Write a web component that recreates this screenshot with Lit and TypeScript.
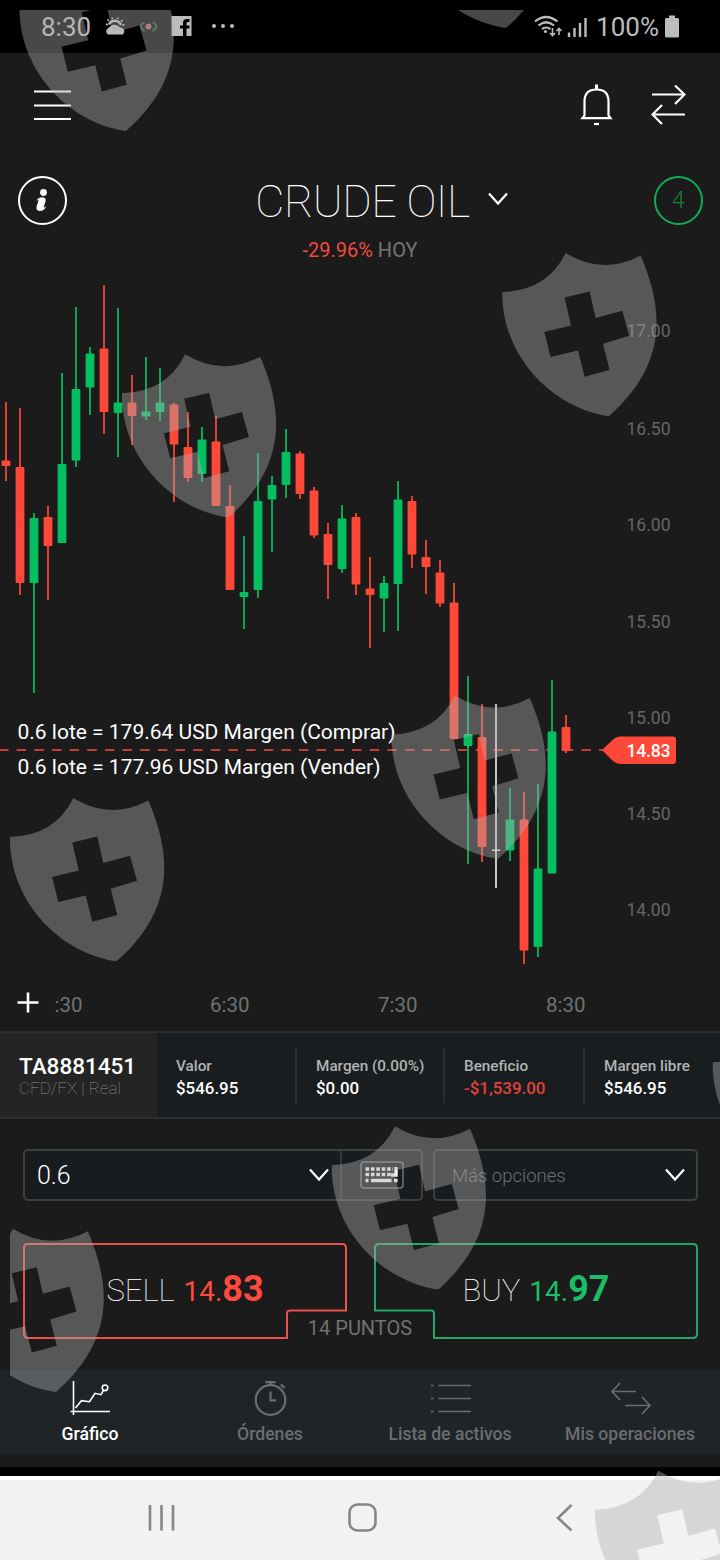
import { LitElement, html, svg, css } from 'lit';
import { customElement, property } from 'lit/decorators.js';
import { classMap } from 'lit/directives/class-map.js';

type Candle = [kind: string, high: number, low: number, top: number, bottom: number];

// high / low of the wick, then top / bottom of the body, in chart units
const CANDLES: Candle[] = [
  ['down', 402, 481, 460.5, 466],
  ['down', 408, 595, 467, 583],
  ['up', 513, 693, 518, 583],
  ['down', 506, 600, 517, 546],
  ['up', 373, 543, 464, 543],
  ['up', 307, 467, 389, 460.5],
  ['up', 347, 415, 353.5, 387.5],
  ['down', 285, 434, 348.5, 412],
  ['up', 308, 457, 402.5, 413],
  ['down', 375, 445, 402.5, 416],
  ['up', 357, 420, 411.5, 416.5],
  ['up', 368, 421, 402.5, 412],
  ['down', 403, 502, 404.5, 444.5],
  ['down', 412, 482, 447, 478],
  ['up', 427, 482, 439.5, 474],
  ['down', 416, 506, 441.5, 506],
  ['down', 485, 590, 506, 590],
  ['up', 536, 629, 592, 597],
  ['up', 453, 598, 501, 590],
  ['up', 476, 552, 485, 499.5],
  ['up', 429, 498, 452, 485],
  ['down', 451, 499, 453.5, 494],
  ['down', 487, 538, 490.5, 535.5],
  ['down', 523, 599, 534, 565],
  ['up', 505, 573, 518.5, 569],
  ['down', 513, 595, 517, 584.5],
  ['down', 557, 648, 588.5, 595],
  ['up', 576, 632, 583, 598.5],
  ['up', 481, 631, 499.5, 584],
  ['down', 496, 568, 501, 554.5],
  ['down', 540, 594, 557, 567],
  ['down', 560, 607, 572.5, 603.5],
  ['down', 583, 739, 602.5, 739],
  ['up', 676, 864, 734, 746],
  ['down', 704, 862, 737, 847],
  ['flat', 704, 888, 849.4, 851],
  ['up', 788, 861, 819.5, 850.5],
  ['down', 792, 964, 819.5, 950.5],
  ['up', 784, 957, 868.5, 947],
  ['up', 680, 873, 731.5, 873.5],
  ['down', 715, 753, 727, 751],
];

const PRICES: [string, number][] = [
  ['17.00', 337],
  ['16.50', 435],
  ['16.00', 531],
  ['15.50', 628],
  ['15.00', 724],
  ['14.50', 820],
  ['14.00', 916],
];

const TIMES: [string, number][] = [
  [':30', 54.5],
  ['6:30', 210],
  ['7:30', 378],
  ['8:30', 546],
];

@customElement('price-chart')
export class PriceChart extends LitElement {
  static override styles = css`
    :host {
      display: block;
      height: 762px;
    }

    svg {
      display: block;
      font-family: Roboto, sans-serif;
    }

    .up {
      fill: #04bf5f;
    }

    .down {
      fill: #ff4837;
    }

    .flat {
      fill: #e4e4e4;
    }

    .wick {
      opacity: 0.85;
    }

    .scale {
      fill: #656666;
      font-size: 17.5px;
    }

    .time {
      fill: #707272;
      font-size: 20.5px;
    }

    .level {
      stroke: #c04039;
      stroke-width: 2;
    }

    .margin {
      fill: #fff;
      font-size: 21px;
    }

    .tag {
      fill: #fff;
      font-size: 17.5px;
      font-weight: 500;
    }

    .add {
      fill: none;
      stroke: #fff;
      stroke-width: 2.6;
    }
  `

  candle([kind, high, low, top, bottom]: Candle, index: number) {
    const x = 6 + index * 14;

    return svg`
      <g class=${kind}>
        <rect class="wick" x=${x - 1} y=${high} width="2" height=${low - high} />
        <rect x=${x - 4.4} y=${top} width="8.8" height=${bottom - top} rx="1" />
      </g>
    `;
  }

  override render() {
    return html`
      <svg width="720" height="762" viewBox="0 270 720 762">
        ${PRICES.map(([label, y]) => svg`
          <text class="scale" x="626.5" y=${y} textLength="44">${label}</text>
        `)}
        ${TIMES.map(([label, x]) => svg`
          <text class="time" x=${x} y="1012">${label}</text>
        `)}
        <path class="level" d="M-1 750H603" stroke-dasharray="9.5 8.15" />
        ${CANDLES.map((candle, index) => this.candle(candle, index))}
        <text class="margin" x="17.5" y="739" textLength="378">0.6 lote = 179.64 USD Margen (Comprar)</text>
        <text class="margin" x="17.5" y="774" textLength="363">0.6 lote = 177.96 USD Margen (Vender)</text>
        <path
          class="down"
          d="M602 750L612 740.5Q616 736.5 621 736.5H673Q676 736.5 676 739.5V761Q676 764 673 764H621Q616 764 612 760Z"
        />
        <text class="tag" x="626.5" y="757" textLength="44">14.83</text>
        <path class="add" d="M17.5 1002.5H38.5M28 992.5V1012.5" />
      </svg>
    `;
  }
}

@customElement('account-figure')
export class AccountFigure extends LitElement {
  static override styles = css`
    :host {
      border-left: 2px solid #2a2f32;
      box-sizing: border-box;
      display: block;
      height: 55px;
      padding: 8px 0 0 19px;
    }

    :host([first]) {
      border-left: 0;
    }

    .label {
      color: #b0b3b3;
      font-size: 15.3px;
      font-weight: 500;
      line-height: 20px;
      white-space: nowrap;
    }

    .amount {
      color: #fff;
      font-size: 16.9px;
      font-weight: 500;
      line-height: 25px;
    }

    .amount--loss {
      color: #e0413c;
    }
  `

  @property()
  label = '';

  @property()
  amount = '';

  override render() {
    return html`
      <div class="label">${this.label}</div>
      <div class=${classMap({
        'amount': true,
        'amount--loss': this.amount.startsWith('-'),
      })}>${this.amount}</div>
    `;
  }
}

const SHIELD = `
  M0 39.3Q45 38 63.3 .3Q100 23 138.3 2.7C158.5 50 170 108 106.5 163.5
  C51 156 -1 104 0 39.3Z
  M62.3 44.7L68.7 72.7L42 79.3L48.3 104.3L75.7 97.7L82.3 124L107.3 117.3
  L100.7 91L127 83L120 58L93.3 65.3L87.3 38.7Z
`;

const SHIELDS = [
  [19.5, -32.5],
  [399.5, -135.5],
  [502.3, 252.7],
  [121.9, 354],
  [391.5, 695.3],
  [10, 797.8],
  [331.7, 1126],
  [-50.5, 1228.5],
  [712.7, 1023],
  [595, 1470.5],
];

@customElement('shield-layer')
export class ShieldLayer extends LitElement {
  static override styles = css`
    :host {
      inset: 10px 0 0 10px;
      overflow: hidden;
      pointer-events: none;
      position: absolute;
    }

    path {
      fill: rgba(174, 174, 174, 0.41);
      fill-rule: evenodd;
    }
  `

  override render() {
    return html`
      <svg width="710" height="1550" viewBox="10 10 710 1550">
        ${SHIELDS.map(([x, y]) => svg`
          <path d=${SHIELD} transform="translate(${x} ${y})" />
        `)}
      </svg>
    `;
  }
}

const chevron = html`
  <svg width="22" height="14" viewBox="0 0 22 14" fill="none" stroke="#fff" stroke-width="2.2">
    <path d="M2 1.5L11 11.5L20 1.5" />
  </svg>
`;

const TABS = [
  {
    label: 'Gráfico',
    icon: svg`
      <path d="M13.5 1V35M10.5 31.5H50M15.5 28L21.5 20.7L29.5 21.7L35 13.3L41 14.7L43.3 10.6" />
      <circle cx="45" cy="7.8" r="2.8" />
    `,
  },
  {
    label: 'Órdenes',
    icon: svg`
      <g stroke-width="2.2">
        <circle cx="30.5" cy="20" r="14.8" />
        <path d="M30.5 11.5V20.3H36M25.5 2.2H35.5M30.5 2.5V5M41 4.5L44.5 8" />
      </g>
    `,
  },
  {
    label: 'Lista de activos',
    icon: svg`
      <path d="M18.5 5.5H51M18.5 18.5H51M18.5 31.5H51" />
      <path d="M11 5.5H13.5M11 18.5H13.5M11 31.5H13.5" />
    `,
  },
  {
    label: 'Mis operaciones',
    icon: svg`
      <path d="M36 11.5H12M20 3L12 11.5L20 20M25 25.5H50M42 17L50 25.5L42 34" />
    `,
  },
];

@customElement('app-root')
export class AppRoot extends LitElement {
  static override styles = css`
    :host {
      background: #1b1b1b;
      color: #fff;
      display: flex;
      flex-direction: column;
      font-family: Roboto, sans-serif;
      height: 1560px;
      overflow: hidden;
      position: relative;
      width: 720px;
    }

    * {
      box-sizing: border-box;
    }

    svg {
      display: block;
      flex: none;
    }

    .status {
      align-items: center;
      background: #000;
      color: #bcbcbc;
      display: flex;
      font-size: 26px;
      height: 53px;
      justify-content: space-between;
      padding: 1px 40px 0 41px;
    }

    .status__side {
      align-items: center;
      display: flex;
    }

    .toolbar {
      align-items: center;
      display: flex;
      height: 104px;
      justify-content: space-between;
      padding: 0 34px 0 33px;
    }

    .toolbar__right {
      display: flex;
      gap: 37px;
    }

    .heading {
      align-items: center;
      display: flex;
      height: 86px;
      justify-content: space-between;
      padding: 0 17px 0 18px;
    }

    .heading__title {
      align-items: center;
      display: flex;
      font-size: 45px;
      font-weight: 100;
      gap: 17px;
      letter-spacing: -0.55px;
      padding: 2px 0 0 43px;
    }

    .heading__title svg {
      margin-bottom: 4px;
    }

    .badge {
      border: 2px solid #12ab59;
      border-radius: 50%;
      color: #12803f;
      font-size: 23px;
      font-weight: 300;
      height: 49px;
      line-height: 45px;
      text-align: center;
      width: 49px;
    }

    .change {
      color: #737676;
      font-size: 20px;
      height: 27px;
      line-height: 14px;
      text-align: center;
    }

    .change__value {
      color: #f04a3f;
    }

    .account {
      background: #191d1f;
      border-bottom: 2px solid #2a302f;
      border-top: 2px solid #2a302f;
      display: grid;
      grid-template-columns: 157px 138px 148px 140px 1fr;
      height: 88px;
      margin-top: -1px;
      align-items: center;
    }

    .account__id {
      align-self: stretch;
      background: #242424;
      font-size: 22.5px;
      font-weight: 500;
      line-height: 24px;
      padding: 21px 0 0 19px;
    }

    .account__kind {
      color: #909090;
      font-size: 17px;
      font-weight: 100;
      line-height: 20px;
    }

    .inputs {
      display: flex;
      gap: 10px;
      margin: 30px 22px 0 23px;
    }

    .field {
      align-items: center;
      background: #181c1f;
      border: 2px solid #3b4041;
      border-radius: 5px;
      display: flex;
      font-size: 25px;
      font-weight: 300;
      height: 52px;
      justify-content: space-between;
      padding: 0 10px 0 12px;
      width: 265px;
    }

    .field svg {
      margin-bottom: 1px;
    }

    .field--lots {
      padding: 0 0 0 12px;
      width: 400px;
    }

    .field__tail {
      align-items: center;
      display: flex;
      gap: 10px;
      height: 100%;
    }

    .field__keys {
      align-items: center;
      border-left: 2px solid #33383a;
      display: flex;
      height: 100%;
      justify-content: center;
      width: 81px;
    }

    .field__hint {
      color: #6b6f70;
      font-size: 18.5px;
      padding: 2px 0 0 5px;
    }

    .deal {
      display: grid;
      grid-template-columns: 324px 324px;
      gap: 27px;
      height: 96px;
      margin: 42px 22px 0 23px;
      position: relative;
    }

    .deal__button {
      display: grid;
    }

    .deal__button > * {
      grid-area: 1 / 1;
    }

    .deal__text {
      align-items: baseline;
      display: flex;
      font-size: 31px;
      font-weight: 100;
      justify-content: center;
      padding-top: 25px;
    }

    .deal__whole {
      font-size: 28px;
      font-weight: 400;
      margin-left: 9px;
    }

    .deal__cents {
      font-size: 36px;
      font-weight: 700;
    }

    .deal__price--sell {
      color: #ff4a3f;
    }

    .deal__price--buy {
      color: #1bbd66;
    }

    .deal__spread {
      bottom: -1px;
      color: #717272;
      font-size: 20px;
      left: 0;
      line-height: 24px;
      position: absolute;
      text-align: center;
      width: 674px;
    }

    .tabs {
      background: #1f2427;
      display: grid;
      grid-template-columns: repeat(4, 1fr);
      height: 84px;
      margin-top: 31px;
    }

    .tab {
      align-items: center;
      color: #6b6e6f;
      display: flex;
      flex-direction: column;
      font-size: 17.6px;
      font-weight: 500;
      gap: 7px;
      padding-top: 10px;
    }

    .tab--active {
      color: #fff;
    }

    .tab svg {
      fill: none;
      stroke: currentColor;
      stroke-width: 1.6;
    }

    .system {
      background: #f2f2f2;
      border-top: 4px solid #fff;
      box-shadow: 0 -9px #000;
      flex: 1;
      margin-top: 22px;
    }
  `

  renderStatus() {
    return html`
      <div class="status">
        <div class="status__side">
          <span>8:30</span>
          <svg width="145" height="26" viewBox="91 14 145 26" fill="#bcbcbc">
            <path d="M108 34.5A3.6 3.6 0 0 1 108.5 28A7 7 0 0 1 120 27.5A4 4 0 0 1 123 34.5Z" />
            <path d="M109 24.5A6.5 6.5 0 0 1 121 25" fill="none" stroke="#bcbcbc" stroke-width="2.5" />
            <path d="M106 24L108 25M107.5 19.5L109 21M112 17.5L112.5 19M118 17.5L117.5 19M122.5 20L121 21.5M124.5 24.5L122.5 25.5" stroke="#bcbcbc" stroke-width="1.6" />
            <path d="M144.5 22Q137 26.5 144.5 31M152.5 22Q160 26.5 152.5 31" fill="none" stroke="#285345" stroke-width="1.8" />
            <circle cx="148.5" cy="26.5" r="3" fill="#b4585c" />
            <path d="M171.5 16H191.5V36H186.5V28.5H189.5V25.5H186.5V23.5Q186.5 22 188 22H189.5V19H187Q183 19 183 23V25.5H180V28.5H183V36H171.5Z" />
            <circle cx="214" cy="26" r="2" />
            <circle cx="223" cy="26" r="2" />
            <circle cx="232" cy="26" r="2" />
          </svg>
        </div>
        <div class="status__side">
          <svg width="62" height="26" viewBox="535 14 62 26" fill="none" stroke="#bcbcbc" stroke-width="2.2">
            <path d="M536 21.5Q547 12.5 558.5 21.5M539.5 25.5Q547 19 555 25.5M543 29Q547 26 551.5 29" />
            <circle cx="546.5" cy="31.5" r="1.6" fill="#bcbcbc" stroke="none" />
            <path d="M553.5 28V35.5M551 33L553.5 35.5L556 33M560 35V28.5M557.5 31L560 28.5L562.5 31" stroke-width="1.6" />
            <path d="M570 37V32.5M575.5 37V28M581 37V23M586.5 37V18" stroke-width="2.4" />
          </svg>
          <span>100%</span>
          <svg width="21" height="26" viewBox="659 14 21 26" fill="#bcbcbc">
            <path d="M669 15.5H675V18H677.5Q679 18 679 19.5V36Q679 37.5 677.5 37.5H666.5Q665 37.5 665 36V19.5Q665 18 666.5 18H669Z" />
          </svg>
        </div>
      </div>
    `;
  }

  renderHeader() {
    return html`
      <div class="toolbar">
        <svg width="38" height="32" viewBox="33 89 38 32" stroke="#fff" stroke-width="2">
          <path d="M34 91.5H71M34 105.5H71M34 119H71" />
        </svg>
        <div class="toolbar__right">
          <svg width="34" height="42" viewBox="580 85 34 42" fill="none" stroke="#fff" stroke-width="2.2">
            <path d="M582.5 119.2H610.5L608.5 116.5V102.5C608.5 94 603.5 90.5 596.5 90.5S584.5 94 584.5 102.5V116.5Z" />
            <path d="M596.5 85.5V90" stroke-width="3" />
            <path d="M594 125H599" />
          </svg>
          <svg width="35" height="42" viewBox="651 85 35 42" fill="none" stroke="#fff" stroke-width="2.2">
            <path d="M652 95.5H684.5M675 86.5L684.5 95.5L675 105M685 115.5H652.5M662 106L652.5 115.5L662 125" />
          </svg>
        </div>
      </div>
      <div class="heading">
        <svg width="49" height="49" viewBox="18 176 49 49" fill="#fff">
          <circle cx="42.5" cy="200.5" r="23.5" fill="none" stroke="#fff" stroke-width="2" />
          <circle cx="43.5" cy="192.5" r="3.4" />
          <path d="M36.5 200.5Q39 197 42.5 197.2Q46.5 197.5 45.5 201.5L43.5 207.5Q44.5 208 46.5 206Q44.5 211 39.5 211Q35.5 210.5 36.7 206L38.7 200Z" />
        </svg>
        <div class="heading__title">CRUDE OIL ${chevron}</div>
        <div class="badge">4</div>
      </div>
      <div class="change"><span class="change__value">-29.96%</span> HOY</div>
    `;
  }

  renderInputs() {
    return html`
      <div class="inputs">
        <div class="field field--lots">
          0.6
          <div class="field__tail">
            ${chevron}
            <div class="field__keys">
              <svg width="44" height="28" viewBox="0 0 44 28" fill="none" stroke="#f4f4f4">
                <rect x="1" y="1" width="42" height="26" rx="3" stroke="#717476" stroke-width="1.5" />
                <path d="M5.5 8H33M5.5 13.5H31" stroke-width="3.4" stroke-dasharray="3.6 1.8" />
                <path d="M5.5 19.5H8.5M11 19.5H31.5M34 19.5H37.5" stroke-width="3.4" />
                <path d="M36 6V14H31" stroke-width="3.4" />
              </svg>
            </div>
          </div>
        </div>
        <div class="field">
          <span class="field__hint">Más opciones</span>
          ${chevron}
        </div>
      </div>
    `;
  }

  renderDeal() {
    return html`
      <div class="deal">
        <div class="deal__button">
          <svg width="324" height="96" fill="none" stroke="#e9524a" stroke-width="2">
            <path d="M5 1H319Q323 1 323 5V67.5H267Q264 67.5 264 70.5V95H5Q1 95 1 91V5Q1 1 5 1Z" />
          </svg>
          <div class="deal__text">
            SELL
            <span class="deal__whole deal__price--sell">14.</span>
            <span class="deal__cents deal__price--sell">83</span>
          </div>
        </div>
        <div class="deal__button">
          <svg width="324" height="96" fill="none" stroke="#22a868" stroke-width="2">
            <path d="M5 1H319Q323 1 323 5V91Q323 95 319 95H60V70.5Q60 67.5 57 67.5H1V5Q1 1 5 1Z" />
          </svg>
          <div class="deal__text">
            BUY
            <span class="deal__whole deal__price--buy">14.</span>
            <span class="deal__cents deal__price--buy">97</span>
          </div>
        </div>
        <div class="deal__spread">14 PUNTOS</div>
      </div>
    `;
  }

  override render() {
    return html`
      ${this.renderStatus()}
      ${this.renderHeader()}
      <price-chart></price-chart>
      <div class="account">
        <div class="account__id">
          TA8881451
          <div class="account__kind">CFD/FX | Real</div>
        </div>
        <account-figure first label="Valor" amount="$546.95"></account-figure>
        <account-figure label="Margen (0.00%)" amount="$0.00"></account-figure>
        <account-figure label="Beneficio" amount="-$1,539.00"></account-figure>
        <account-figure label="Margen libre" amount="$546.95"></account-figure>
      </div>
      ${this.renderInputs()}
      ${this.renderDeal()}
      <div class="tabs">
        ${TABS.map(({ label, icon }, index) => html`
          <div class=${classMap({ 'tab': true, 'tab--active': index === 0 })}>
            <svg width="60" height="37" viewBox="0 0 60 37">${icon}</svg>
            <span>${label}</span>
          </div>
        `)}
      </div>
      <div class="system">
        <svg width="720" height="80" viewBox="0 1480 720 80" fill="none" stroke="#868686" stroke-width="2.6">
          <path d="M150 1505V1530.5M161.5 1505V1530.5M173 1505V1530.5" />
          <rect x="349.5" y="1504.5" width="26" height="26" rx="8" />
          <path d="M571.5 1505L558 1518L571.5 1530.5" />
        </svg>
      </div>
      <shield-layer></shield-layer>
    `;
  }
}

declare global {
  interface HTMLElementTagNameMap {
    'price-chart': PriceChart;
    'account-figure': AccountFigure;
    'shield-layer': ShieldLayer;
    'app-root': AppRoot;
  }
}
